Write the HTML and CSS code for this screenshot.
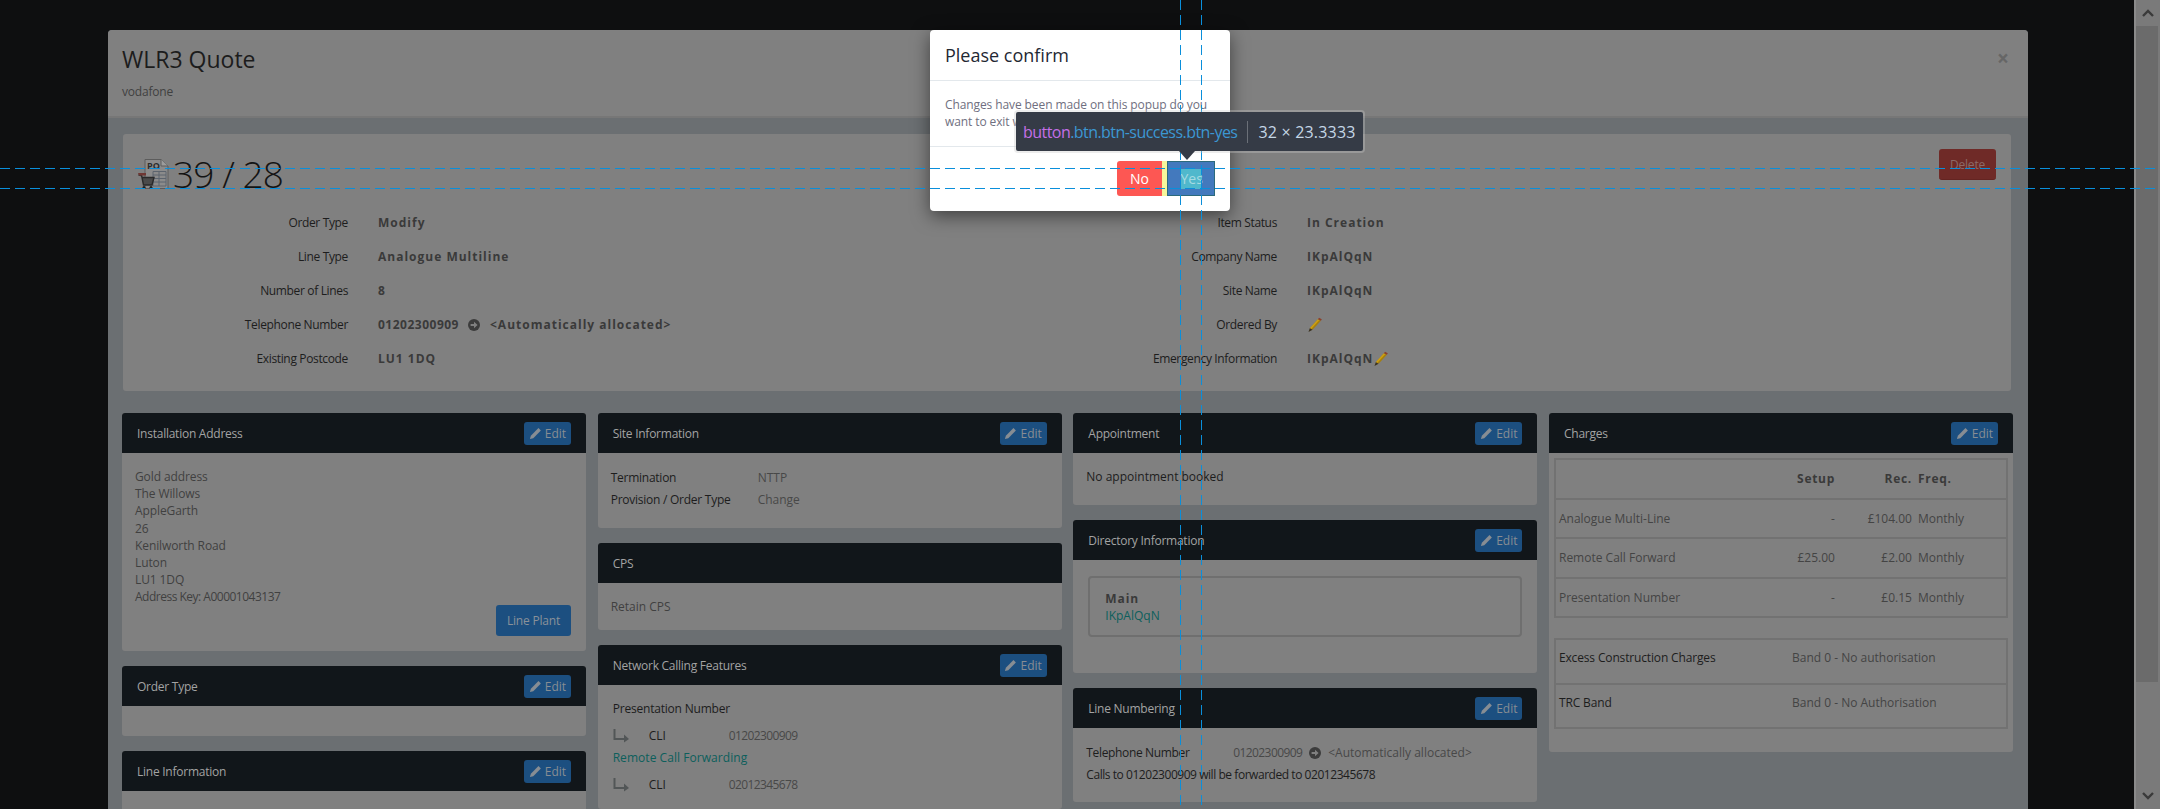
FILE: index.html
```html
<!DOCTYPE html>
<html lang="en">
<head>
    <meta charset="UTF-8">
    <title>WLR3 Quote</title>
    <link rel="stylesheet" href="styles.css">
</head>
<body>
    <svg class="icon-defs" width="0" height="0">
        <symbol id="pencil" viewBox="0 0 14 14">
            <path d="M10.2 1.2 L12.8 3.8 L4.6 12 L1 13 L2 9.4 Z" fill="currentColor"/>
        </symbol>
        <symbol id="pencil-colour" viewBox="0 0 14 14">
            <path d="M10.2 2 L13 3.6 L5.2 12 L2.6 10.4 Z" fill="#a67f0c"/>
            <path d="M10.2 2 L11.6 2.8 L3.9 11.2 L2.6 10.4 Z" fill="#cda014"/>
            <path d="M2.6 10.4 L5.2 12 L1.4 14 Z" fill="#3b3220"/>
            <path d="M10.2 2 L13 3.6 L13.8 2.2 L11.2 0.6 Z" fill="#8c3f2b"/>
        </symbol>
        <symbol id="go" viewBox="0 0 12 12">
            <circle cx="6" cy="6" r="6" fill="currentColor"/>
            <path d="M2.6 5 H6 V2.8 L9.6 6 L6 9.2 V7 H2.6 Z" fill="#808080"/>
        </symbol>
        <symbol id="sub" viewBox="0 0 17 15">
            <path d="M1.5 1 V11 H12" fill="none" stroke="currentColor" stroke-width="2"/>
            <path d="M11 6.5 L16 11 L11 14.5 Z" fill="currentColor"/>
        </symbol>
    </svg>

    <div class="screen">
        <div class="backdrop">
            <div class="modal">
                <div class="modal-header">
                    <div>
                        <h1>WLR3 Quote</h1>
                        <p class="supplier">vodafone</p>
                    </div>
                    <span class="close">×</span>
                </div>
                <div class="modal-body">
                    <div class="summary">
                        <div class="summary-top">
                            <div class="order-ref">
                                <svg class="po-icon" viewBox="0 0 31 31">
                                    <path d="M7 0.5 H23 L30 7 V29.5 H7 Z" fill="#8b8b8b" stroke="#5c5c5c"/>
                                    <path d="M23 0.5 V7 H30" fill="#9c9c9c" stroke="#5c5c5c"/>
                                    <text x="9" y="10" class="po-text">PO</text>
                                    <path d="M15 12.5 H28 V27 H15 Z M15 16 H28 M15 19.5 H28 M15 23 H28 M21 12.5 V27" fill="none" stroke="#5c646e"/>
                                    <path d="M0.5 16 H3.5 L5.5 26 H14 L16 18.5 H4.5" fill="#4a4a4a" stroke="#2a2a2a" stroke-width="1.4"/>
                                    <path d="M0 14 H8 V16.5 H1 Z" fill="#6f3733"/>
                                    <circle cx="6" cy="28.5" r="1.5" fill="#1f1f1f"/>
                                    <circle cx="13" cy="28.5" r="1.5" fill="#1f1f1f"/>
                                </svg>
                                <span class="order-number">39 / 28</span>
                            </div>
                            <button class="btn-delete">Delete</button>
                        </div>
                        <div class="summary-grid">
                            <div class="info-col">
                                <div class="info-row"><span class="info-label">Order Type</span><span class="info-value">Modify</span></div>
                                <div class="info-row"><span class="info-label">Line Type</span><span class="info-value">Analogue Multiline</span></div>
                                <div class="info-row"><span class="info-label">Number of Lines</span><span class="info-value">8</span></div>
                                <div class="info-row"><span class="info-label">Telephone Number</span><span class="info-value"><span class="tight">01202300909</span><svg class="go-icon"><use href="#go"/></svg>&lt;Automatically allocated&gt;</span></div>
                                <div class="info-row"><span class="info-label">Existing Postcode</span><span class="info-value">LU1 1DQ</span></div>
                            </div>
                            <div class="info-col info-col-right">
                                <div class="info-row"><span class="info-label">Item Status</span><span class="info-value">In Creation</span></div>
                                <div class="info-row"><span class="info-label">Company Name</span><span class="info-value">IKpAlQqN</span></div>
                                <div class="info-row"><span class="info-label">Site Name</span><span class="info-value">IKpAlQqN</span></div>
                                <div class="info-row"><span class="info-label">Ordered By</span><span class="info-value"><svg class="pencil-icon"><use href="#pencil-colour"/></svg></span></div>
                                <div class="info-row"><span class="info-label">Emergency Information</span><span class="info-value">IKpAlQqN<svg class="pencil-icon"><use href="#pencil-colour"/></svg></span></div>
                            </div>
                        </div>
                    </div>

                    <div class="columns">
                        <div class="column">
                            <section class="card card-install">
                                <div class="card-head"><span>Installation Address</span><button class="btn-edit"><svg><use href="#pencil"/></svg>Edit</button></div>
                                <div class="card-body address">
                                    <div>Gold address</div>
                                    <div>The Willows</div>
                                    <div>AppleGarth</div>
                                    <div>26</div>
                                    <div>Kenilworth Road</div>
                                    <div>Luton</div>
                                    <div>LU1 1DQ</div>
                                    <div class="address-key">Address Key: A00001043137</div>
                                    <button class="btn-plant">Line Plant</button>
                                </div>
                            </section>
                            <section class="card">
                                <div class="card-head"><span>Order Type</span><button class="btn-edit"><svg><use href="#pencil"/></svg>Edit</button></div>
                                <div class="card-body card-empty"></div>
                            </section>
                            <section class="card">
                                <div class="card-head"><span>Line Information</span><button class="btn-edit"><svg><use href="#pencil"/></svg>Edit</button></div>
                                <div class="card-body card-empty"></div>
                            </section>
                        </div>

                        <div class="column">
                            <section class="card">
                                <div class="card-head"><span>Site Information</span><button class="btn-edit"><svg><use href="#pencil"/></svg>Edit</button></div>
                                <div class="card-body pairs pairs-site">
                                    <div class="pair"><span class="pair-label">Termination</span><span class="pair-value">NTTP</span></div>
                                    <div class="pair"><span class="pair-label">Provision / Order Type</span><span class="pair-value">Change</span></div>
                                </div>
                            </section>
                            <section class="card">
                                <div class="card-head"><span>CPS</span></div>
                                <div class="card-body cps">Retain CPS</div>
                            </section>
                            <section class="card">
                                <div class="card-head"><span>Network Calling Features</span><button class="btn-edit"><svg><use href="#pencil"/></svg>Edit</button></div>
                                <div class="card-body features">
                                    <div class="feature-title">Presentation Number</div>
                                    <div class="feature-row"><svg class="sub-icon"><use href="#sub"/></svg><span class="feature-key">CLI</span><span class="pair-value tight">01202300909</span></div>
                                    <div class="feature-link">Remote Call Forwarding</div>
                                    <div class="feature-row"><svg class="sub-icon"><use href="#sub"/></svg><span class="feature-key">CLI</span><span class="pair-value tight">02012345678</span></div>
                                </div>
                            </section>
                        </div>

                        <div class="column">
                            <section class="card">
                                <div class="card-head"><span>Appointment</span><button class="btn-edit"><svg><use href="#pencil"/></svg>Edit</button></div>
                                <div class="card-body appointment">No appointment booked</div>
                            </section>
                            <section class="card">
                                <div class="card-head"><span>Directory Information</span><button class="btn-edit"><svg><use href="#pencil"/></svg>Edit</button></div>
                                <div class="card-body directory">
                                    <div class="directory-box">
                                        <div class="directory-name">Main</div>
                                        <div class="feature-link">IKpAlQqN</div>
                                    </div>
                                </div>
                            </section>
                            <section class="card">
                                <div class="card-head"><span>Line Numbering</span><button class="btn-edit"><svg><use href="#pencil"/></svg>Edit</button></div>
                                <div class="card-body numbering">
                                    <div class="pair"><span class="pair-label number-label">Telephone Number</span><span class="pair-value"><span class="tight">01202300909</span><svg class="go-icon"><use href="#go"/></svg>&lt;Automatically allocated&gt;</span></div>
                                    <div class="pair"><span class="pair-label calls-note">Calls to 01202300909 will be forwarded to 02012345678</span></div>
                                </div>
                            </section>
                        </div>

                        <div class="column">
                            <section class="card">
                                <div class="card-head"><span>Charges</span><button class="btn-edit"><svg><use href="#pencil"/></svg>Edit</button></div>
                                <div class="card-body charges">
                                    <table class="charges-table">
                                        <tr class="charges-head"><th></th><th class="num">Setup</th><th class="num">Rec.</th><th class="freq">Freq.</th></tr>
                                        <tr><td>Analogue Multi-Line</td><td class="num">-</td><td class="num">£104.00</td><td class="freq">Monthly</td></tr>
                                        <tr><td>Remote Call Forward</td><td class="num">£25.00</td><td class="num">£2.00</td><td class="freq">Monthly</td></tr>
                                        <tr><td>Presentation Number</td><td class="num">-</td><td class="num">£0.15</td><td class="freq">Monthly</td></tr>
                                    </table>
                                    <table class="excess-table">
                                        <tr><td class="excess-key">Excess Construction Charges</td><td>Band 0 - No authorisation</td></tr>
                                        <tr><td class="excess-key">TRC Band</td><td>Band 0 - No Authorisation</td></tr>
                                    </table>
                                </div>
                            </section>
                        </div>
                    </div>
                </div>
            </div>
        </div>

        <div class="scrollbar">
            <svg class="scroll-arrow" viewBox="0 0 12 8"><path d="M1 7 L6 2 L11 7" fill="none" stroke="currentColor" stroke-width="2.4"/></svg>
            <div class="scroll-track"><div class="scroll-thumb"></div></div>
            <svg class="scroll-arrow" viewBox="0 0 12 8"><path d="M1 1 L6 6 L11 1" fill="none" stroke="currentColor" stroke-width="2.4"/></svg>
        </div>

        <div class="confirm">
            <div class="confirm-head">Please confirm</div>
            <div class="confirm-body">Changes have been made on this popup do you want to exit without saving?</div>
            <div class="confirm-foot">
                <button class="btn-no">No</button><span class="btn-gap"></span><button class="btn-yes"><span class="btn-yes-text">Yes</span></button>
            </div>
        </div>

        <div class="guide guide-h guide-top"></div>
        <div class="guide guide-h guide-bottom"></div>
        <div class="guide guide-v guide-left"></div>
        <div class="guide guide-v guide-right"></div>

        <div class="inspect-tip">
            <span class="tip-tag">button</span><span class="tip-class">.btn.btn-success.btn-yes</span><span class="tip-size">32 × 23.3333</span>
        </div>
    </div>
</body>
</html>
```

FILE: styles.css
```css
* {
    box-sizing: border-box;
}
html,
body {
    margin: 0;
    height: 100%;
    overflow: hidden;
}
body {
    font-family: "Open Sans", Arial, sans-serif;
    font-size: 12px;
    color: #2a2a2a;
    background-color: #0e0f10;
}
button {
    font-family: inherit;
    border: none;
    padding: 0;
}
.icon-defs {
    position: absolute;
}
.screen {
    position: relative;
    display: flex;
    height: 809px;
    overflow: hidden;
}
.backdrop {
    flex: 1;
    padding: 30px 0 0 108px;
    overflow: hidden;
}
.tight {
    letter-spacing: -0.6px;
}

/* quote popup */
.modal {
    width: 1920px;
    background-color: #6b6f72;
    border-radius: 4px 4px 0 0;
}
.modal-header {
    display: flex;
    justify-content: space-between;
    height: 88px;
    padding: 13px 15px 0 14px;
    background-color: #808080;
    border-bottom: 2px solid #777;
    border-radius: 4px 4px 0 0;
}
.modal-header h1 {
    margin: 0;
    font-size: 23px;
    font-weight: 400;
    line-height: 33px;
    color: #1c1c1c;
}
.supplier {
    margin: 8px 0 0;
    font-size: 12px;
    line-height: 16px;
    letter-spacing: -0.2px;
    color: #404040;
}
.close {
    margin: 3px 4px 0 0;
    font-size: 21px;
    line-height: 24px;
    font-weight: 700;
    color: #666;
}
.modal-body {
    padding: 16px 15px 0 14px;
}
.summary {
    width: 1888px;
    height: 257px;
    margin-left: 1px;
    background-color: #808080;
    border-radius: 3px;
}
.summary-top {
    display: flex;
    justify-content: space-between;
    align-items: flex-start;
    height: 71px;
    padding: 15px 15px 0 15px;
}
.order-ref {
    display: flex;
    align-items: center;
    margin-top: 7px;
    height: 36px;
}
.po-icon {
    width: 31px;
    height: 31px;
    margin-right: 4px;
}
.po-text {
    font-family: "Open Sans", Arial, sans-serif;
    font-size: 9px;
    font-weight: 700;
    fill: #2c2c2c;
}
.order-number {
    font-size: 37px;
    font-weight: 300;
    line-height: 36px;
    letter-spacing: -0.9px;
    color: #141414;
}
.btn-delete {
    width: 57px;
    height: 31px;
    font-size: 12px;
    letter-spacing: -0.2px;
    color: #8c6a68;
    background-color: #6f2a27;
    border-bottom: 1px solid #642421;
    border-radius: 3px;
}
.summary-grid {
    display: grid;
    grid-template-columns: 944px 944px;
}
.info-row {
    display: flex;
    align-items: center;
    height: 34px;
}
.info-label {
    flex: none;
    width: 225px;
    margin-right: 30px;
    text-align: right;
    letter-spacing: -0.35px;
    color: #1d1d1d;
}
.info-col-right .info-label {
    width: 210px;
}
.info-value {
    font-size: 12px;
    font-weight: 700;
    letter-spacing: 1px;
    color: #3a3a3a;
}
.info-value .tight {
    letter-spacing: 0.5px;
}
.go-icon {
    width: 12px;
    height: 12px;
    margin: 0 7px;
    color: #3c3c3c;
    vertical-align: -2px;
}
.info-value .go-icon {
    margin: 0 10px 0 9px;
}
.pencil-icon {
    width: 15px;
    height: 15px;
    vertical-align: -3px;
}

/* cards */
.columns {
    display: grid;
    grid-template-columns: repeat(4, 464px);
    column-gap: 11.67px;
    margin-top: 22px;
    align-items: start;
}
.column {
    display: flex;
    flex-direction: column;
    gap: 15px;
}
.card {
    background-color: #808080;
    border-radius: 3px;
}
.card-head {
    display: flex;
    justify-content: space-between;
    align-items: center;
    height: 40px;
    padding: 0 15px 0 15px;
    font-size: 12px;
    letter-spacing: -0.25px;
    color: #a3a3a3;
    background-color: #11161a;
    border-radius: 3px 3px 0 0;
}
.btn-edit {
    display: flex;
    align-items: center;
    justify-content: center;
    gap: 3px;
    width: 47px;
    height: 23px;
    font-size: 12px;
    letter-spacing: 0;
    color: #878d93;
    background-color: #1c4f80;
    border-radius: 3px;
}
.btn-edit svg {
    width: 13px;
    height: 13px;
}
.card-body {
    padding: 15px 13px;
    color: #404040;
}
.card-empty {
    height: 30px;
    padding: 0;
}
.address {
    position: relative;
    height: 198px;
    padding-top: 15px;
    line-height: 17.2px;
    letter-spacing: -0.1px;
}
.address-key {
    letter-spacing: -0.5px;
}
.btn-plant {
    position: absolute;
    right: 15px;
    bottom: 15px;
    width: 75px;
    height: 31px;
    font-size: 12px;
    letter-spacing: -0.2px;
    color: #8a9199;
    background-color: #1c4f80;
    border-radius: 3px;
}
.pairs-site {
    height: 75px;
    padding-top: 13px;
}
.pair {
    display: flex;
    align-items: center;
    height: 22px;
}
.pair-label {
    color: #1d1d1d;
}
.pairs-site .pair-label {
    width: 147px;
    letter-spacing: -0.25px;
}
.pair-value {
    color: #484848;
}
.calls-note {
    letter-spacing: -0.45px;
}
.cps {
    height: 47px;
    padding-top: 16px;
    line-height: 16px;
}
.features {
    padding: 16px 15px 0;
    height: 124px;
}
.feature-title {
    line-height: 16px;
    letter-spacing: -0.2px;
    color: #1d1d1d;
}
.feature-row {
    display: flex;
    align-items: center;
    height: 17px;
}
.feature-title + .feature-row {
    margin-top: 10px;
}
.sub-icon {
    width: 17px;
    height: 15px;
    margin-right: 19px;
    color: #525657;
}
.feature-key {
    width: 80px;
    color: #1d1d1d;
}
.feature-link {
    line-height: 17px;
    color: #0c5f5c;
}
.features .feature-link {
    margin: 5px 0 10px;
    letter-spacing: 0.05px;
}
.appointment {
    height: 52px;
    padding-top: 16px;
    line-height: 16px;
    color: #1d1d1d;
}
.directory {
    height: 113px;
    padding: 16px 15px 0;
}
.directory-box {
    height: 61px;
    padding: 12px 15px 0;
    border: 2px solid #6f6f6f;
    border-radius: 4px;
}
.directory-name {
    font-size: 12px;
    font-weight: 700;
    line-height: 17px;
    letter-spacing: 0.9px;
    color: #3a3a3a;
}
.numbering {
    height: 74px;
    padding-top: 13px;
}
.number-label {
    width: 147px;
    letter-spacing: -0.35px;
}
.charges {
    height: 299px;
    padding: 5px 5px 0;
}
.charges-table,
.excess-table {
    width: 454px;
    border-collapse: collapse;
    border: 2px solid #727272;
    color: #444;
}
.charges-table tr {
    height: 39.6px;
    border-bottom: 2px solid #727272;
}
.charges-table td,
.charges-table th {
    padding: 0 0 0 3px;
    font-weight: 400;
}
.charges-table td:first-child {
    width: 222px;
}
.charges-table .num {
    text-align: right;
}
.charges-table .num:nth-child(2) {
    width: 58px;
}
.charges-table .num:nth-child(3) {
    width: 77px;
}
.charges-table .freq {
    padding-left: 6px;
    text-align: left;
}
.charges-table th {
    font-size: 12px;
    font-weight: 700;
    letter-spacing: 0.7px;
    color: #3a3a3a;
}
.excess-table {
    margin-top: 20px;
}
.excess-table tr {
    height: 44.5px;
    border-bottom: 2px solid #727272;
}
.excess-table td {
    padding: 0 0 8px 3px;
}
.excess-key {
    width: 234px;
    letter-spacing: -0.15px;
    color: #1d1d1d;
}

/* window scrollbar */
.scrollbar {
    display: flex;
    flex-direction: column;
    align-items: center;
    flex: none;
    width: 26px;
    background-color: #7a7a7a;
    border-left: 2px solid #8a8a8a;
    color: #3a3a3a;
}
.scroll-arrow {
    flex: none;
    width: 12px;
    height: 8px;
    margin: 9px 0;
}
.scroll-track {
    flex: 1;
    align-self: stretch;
}
.scroll-thumb {
    height: 656px;
    margin-right: 2px;
    background-color: #6b6b6b;
}

/* confirm dialog on top of everything */
.confirm {
    position: absolute;
    left: 930px;
    top: 30px;
    width: 300px;
    height: 181px;
    background-color: #fff;
    border-radius: 4px;
    box-shadow: 0 5px 18px rgba(0, 0, 0, 0.5);
}
.confirm-head {
    height: 51px;
    padding: 0 15px;
    font-size: 18px;
    line-height: 50px;
    color: #1f2833;
    border-bottom: 1px solid #e3e8ec;
}
.confirm-body {
    height: 66px;
    padding: 15px 15px 0;
    font-size: 12px;
    line-height: 17px;
    letter-spacing: -0.1px;
    color: #6f6f80;
    border-bottom: 1px solid #e3e8ec;
}
.confirm-foot {
    display: flex;
    justify-content: flex-end;
    padding: 14px 15px 0 0;
}
.btn-no {
    width: 45px;
    height: 35px;
    font-size: 14px;
    color: #fff;
    background-color: #fd5753;
    border-radius: 3px 0 0 3px;
}
.btn-gap {
    width: 5px;
    height: 35px;
    background-color: #f6f69c;
}
.btn-yes {
    display: flex;
    align-items: center;
    justify-content: center;
    width: 48px;
    height: 35px;
    background-color: #4379bd;
    border: 1px solid #2c6a7c;
}
.btn-yes-text {
    width: 21px;
    height: 20px;
    font-size: 14px;
    line-height: 20px;
    text-align: center;
    color: #a6dbe2;
    background-color: #50b8cc;
}

/* devtools guide lines and tooltip */
.guide-h {
    position: absolute;
    left: 0;
    width: 100%;
    height: 1px;
    background-image: repeating-linear-gradient(90deg, #0a8fdb 0 10px, transparent 10px 15px);
}
.guide-top {
    top: 168px;
}
.guide-bottom {
    top: 188px;
}
.guide-v {
    position: absolute;
    top: 0;
    width: 1px;
    height: 100%;
    background-image: repeating-linear-gradient(180deg, #0a8fdb 0 10px, transparent 10px 15px);
}
.guide-left {
    left: 1180px;
}
.guide-right {
    left: 1201px;
}
.inspect-tip {
    position: absolute;
    left: 1016px;
    top: 112px;
    display: flex;
    align-items: center;
    width: 347px;
    height: 39px;
    padding-left: 7px;
    font-size: 16px;
    white-space: nowrap;
    background-color: #353b46;
    border-radius: 2px;
    box-shadow: 0 0 0 2px rgba(200, 200, 200, 0.35);
}
.inspect-tip::after {
    content: "";
    position: absolute;
    left: 163px;
    top: 39px;
    border-left: 8px solid transparent;
    border-right: 8px solid transparent;
    border-top: 9px solid #353b46;
}
.tip-tag {
    letter-spacing: -0.55px;
    color: #c46fe6;
}
.tip-class {
    letter-spacing: -0.55px;
    color: #3c97d3;
}
.tip-size {
    margin-left: 10px;
    padding-left: 10px;
    letter-spacing: 0.2px;
    color: #c5d7e6;
    border-left: 1px solid #6b7078;
}
```
